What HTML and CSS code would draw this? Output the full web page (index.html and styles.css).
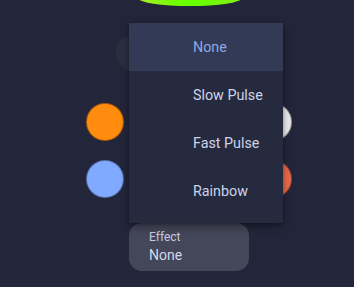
FILE: index.html
```html
<!DOCTYPE html>
<html>
<head>
<meta charset="utf-8">
<link rel="stylesheet" href="styles.css">
</head>
<body>
<div class="stage">
  <div class="glow"></div>
  <div class="power"></div>
  <div class="swatches">
    <span class="sw orange"></span>
    <span class="sw hidden"></span>
    <span class="sw hidden"></span>
    <span class="sw white"></span>
    <span class="sw blue"></span>
    <span class="sw hidden"></span>
    <span class="sw hidden"></span>
    <span class="sw red"></span>
  </div>
  <div class="effect">
    <div class="effect-label">Effect</div>
    <div class="effect-value">None</div>
  </div>
  <ul class="menu">
    <li class="item selected">None</li>
    <li class="item">Slow Pulse</li>
    <li class="item">Fast Pulse</li>
    <li class="item">Rainbow</li>
  </ul>
</div>
</body>
</html>
```
FILE: styles.css
```css
html, body {
  margin: 0;
  padding: 0;
  background: #23263a;
  width: 354px;
  height: 287px;
  overflow: hidden;
  font-family: Roboto, "Liberation Sans", sans-serif;
}
.stage {
  position: relative;
  width: 354px;
  height: 287px;
  padding-top: 34px;
  box-sizing: border-box;
}
.glow {
  position: absolute;
  left: 138px;
  top: -10px;
  width: 104px;
  height: 16px;
  border-radius: 50%;
  background: linear-gradient(90deg, #a4ee22 0%, #6cff00 40%, #66ff00 60%, #86ee10 100%);
}
.power {
  width: 38px;
  height: 38px;
  margin-left: 116px;
  border-radius: 50%;
  background: #2b2e41;
}
.swatches {
  display: grid;
  grid-template-columns: repeat(4, 38px);
  column-gap: 18px;
  row-gap: 19px;
  margin-top: 31px;
  margin-left: 86px;
}
.sw {
  width: 38px;
  height: 38px;
  border-radius: 50%;
  box-sizing: border-box;
  border: 1px solid rgba(0,0,0,0.35);
}
.orange { background: #ff8c0e; }
.blue { background: #80aaff; }
.white { background: #ececec; }
.red { background: #ec6a4a; }
.hidden { background: transparent; border: none; }
.effect {
  margin-top: 25px;
  margin-left: 129px;
  width: 120px;
  height: 48px;
  box-sizing: border-box;
  padding: 6px 20px 0;
  border-radius: 13px;
  background: #44465a;
}
.effect-label {
  font-size: 12px;
  line-height: 16px;
  color: #c9cbdc;
}
.effect-value {
  font-size: 14px;
  line-height: 20px;
  color: #d6d8e8;
}
.menu {
  position: absolute;
  left: 129px;
  top: 23px;
  width: 154px;
  margin: 0;
  padding: 0 0 8px;
  list-style: none;
  background: #262a3e;
  border-radius: 2px;
  box-shadow: 0 4px 10px rgba(0,0,0,0.35), 0 1px 3px rgba(0,0,0,0.25);
}
.item {
  height: 48px;
  line-height: 48px;
  padding-left: 64px;
  font-size: 14.3px;
  color: #cfd3ea;
}
.item.selected {
  background: #323a56;
  color: #8ea7e3;
}
```
